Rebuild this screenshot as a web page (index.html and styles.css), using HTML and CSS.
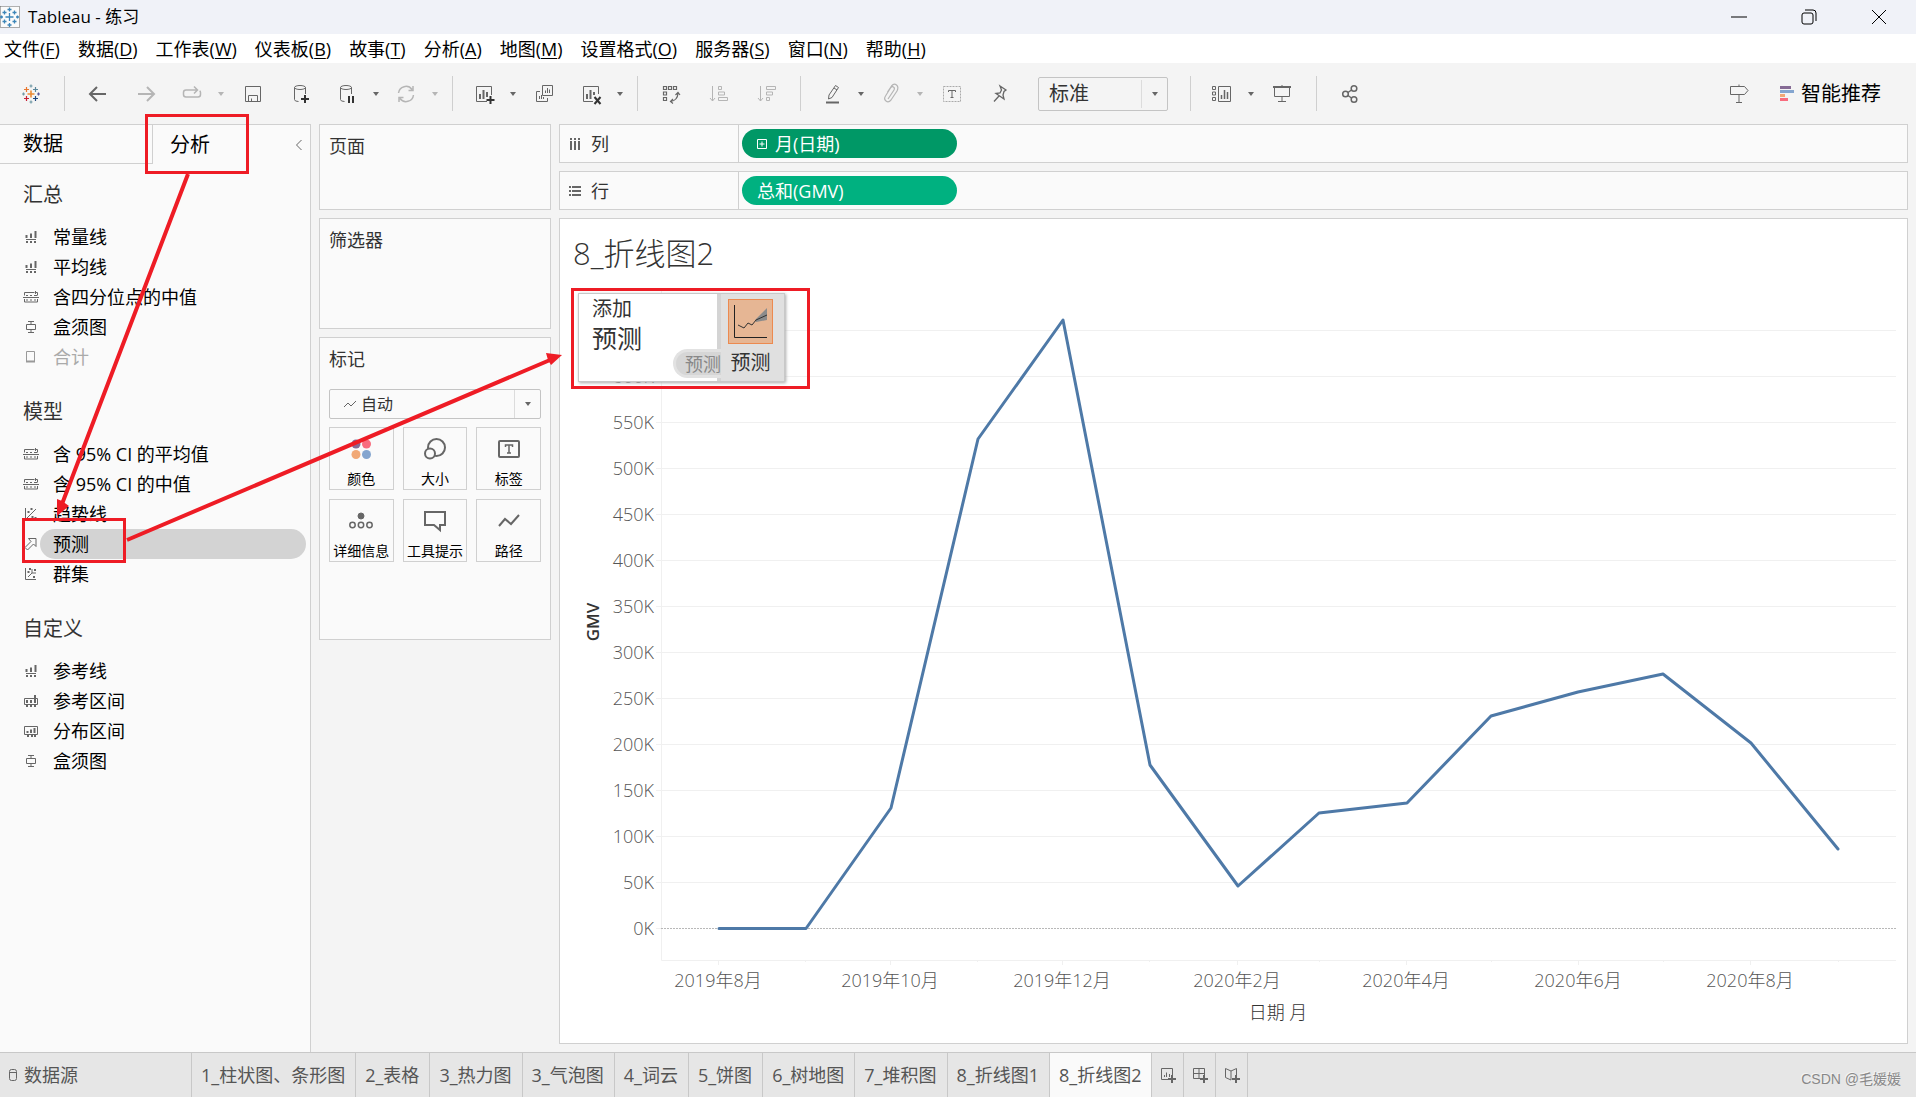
FILE: index.html
```html
<!DOCTYPE html>
<html lang="zh-CN">
<head>
<meta charset="utf-8">
<title>Tableau - 练习</title>
<link rel="stylesheet" href="styles.css">
</head>
<body>
<svg class="defs" aria-hidden="true">
  <symbol id="ref-line" viewBox="0 0 18 18">
    <path d="M4.500 7v3M9 5.500v4.500M13.500 3v7" stroke-width="2"/>
    <path d="M4 11.500h10"/>
    <path d="M4 14h2M8 14h2M12 14h2" stroke-width="2"/>
  </symbol>
  <symbol id="ref-dist" viewBox="0 0 18 18">
    <path d="M2.500 7.500v-3h10M14 4.500h1.500v3M2.500 11v3h13v-3M1 9.500h16M4 7.500h2M8 7.500h2M12 7.500h3M4 12h2M8 12h2M12 12h2M13.500 3v3"/>
  </symbol>
  <symbol id="box-plot" viewBox="0 0 18 18">
    <path d="M6 3.500h6M9 3.500v3M4.500 6.500h9v5h-9zM9 11.500v3M6 14.500h6"/>
  </symbol>
  <symbol id="caret" viewBox="0 0 8 8"><path d="M1 2h6L4 6z"/></symbol>
</svg>

<header class="titlebar">
  <svg class="app-icon" viewBox="0 0 20 22"><rect width="20" height="22" fill="#fbfbfb"/><path d="M20 0v22H0" fill="none" stroke="#a9a9a9" stroke-width="2"/><path d="M9.500 7v8M5.500 11h8M9.500 1.500v4M7.500 3.500h4M9.500 17v4M7.500 19h4M4.500 4.500v4M2.500 6.500h4M14.500 4.500v4M12.500 6.500h4M4.500 13.500v4M2.500 15.500h4M14.500 13.500v4M12.500 15.500h4M1.500 9.500v3M0 11h3M17.500 9.500v3M16 11h3" stroke="#3d86b8" stroke-width="1.300"/></svg>
  <h1 class="app-title">Tableau - 练习</h1>
  <div class="window-controls">
    <button aria-label="最小化"><svg viewBox="0 0 16 16"><path d="M0 8h16"/></svg></button>
    <button aria-label="还原"><svg viewBox="0 0 16 16"><rect x="1" y="4" width="11" height="11" rx="2"/><path d="M4 1h8a3 3 0 0 1 3 3v8"/></svg></button>
    <button aria-label="关闭"><svg viewBox="0 0 16 16"><path d="M1 1l14 14M15 1L1 15"/></svg></button>
  </div>
</header>

<nav class="menubar">
  <button>文件(<u>F</u>)</button>
  <button>数据(<u>D</u>)</button>
  <button>工作表(<u>W</u>)</button>
  <button>仪表板(<u>B</u>)</button>
  <button>故事(<u>T</u>)</button>
  <button>分析(<u>A</u>)</button>
  <button>地图(<u>M</u>)</button>
  <button>设置格式(<u>O</u>)</button>
  <button>服务器(<u>S</u>)</button>
  <button>窗口(<u>N</u>)</button>
  <button>帮助(<u>H</u>)</button>
</nav>

<div class="toolbar">
  <button class="tool" aria-label="起始页"><svg viewBox="0 0 24 24"><g stroke-width="1.200"><path d="M12 8.500v7M8.500 12h7" stroke="#eb8a35" stroke-width="1.600"/><path d="M7.500 5v5M5 7.500h5" stroke="#e8762d"/><path d="M16.500 5v5M14 7.500h5" stroke="#5b879b"/><path d="M7.500 14v5M5 16.500h5" stroke="#c72035"/><path d="M16.500 14v5M14 16.500h5" stroke="#1f457e"/><path d="M12 2.500v3M10.500 4h3M12 18.500v3M10.500 20h3" stroke="#7199a6"/><path d="M4.500 10.500v3M3 12h3" stroke="#7199a6"/><path d="M19.500 10.500v3M18 12h3" stroke="#59589b"/></g></svg></button>
  <span class="sep"></span>
  <button class="tool" aria-label="撤消"><svg viewBox="0 0 24 24"><path d="M4 12h16M11 5l-7 7 7 7" stroke-width="2"/></svg></button>
  <button class="tool dim" aria-label="重做"><svg viewBox="0 0 24 24"><path d="M4 12h16M13 5l7 7-7 7" stroke-width="2"/></svg></button>
  <button class="tool split dim" aria-label="重播"><svg viewBox="0 0 24 24"><path d="M17 8H6a2.500 2.500 0 0 0-2.500 2.500v2A2.500 2.500 0 0 0 6 15h12a2.500 2.500 0 0 0 2.500-2.500v-2q0-1-.8-1.800M14 4.500L17.500 8 14 11.500" stroke-width="1.500"/></svg><svg class="caret"><use href="#caret"/></svg></button>
  <button class="tool" aria-label="保存"><svg viewBox="0 0 24 24"><path d="M4.500 4.500h15v15h-15zM7.500 19.500v-6h9v6M10.500 19.500v-3"/></svg></button>
  <button class="tool" aria-label="新建数据源"><svg viewBox="0 0 24 24"><ellipse cx="11" cy="5.500" rx="5.500" ry="2"/><path d="M5.500 5.500v12q0 2 4 2M16.500 5.500V12"/><path d="M16 13v8M12 17h8" stroke="#333" stroke-width="2"/></svg></button>
  <button class="tool split" aria-label="暂停自动更新"><svg viewBox="0 0 24 24"><ellipse cx="11" cy="5.500" rx="5.500" ry="2"/><path d="M5.500 5.500v12q0 2 4 2M16.500 5.500V12"/><path d="M14 14v7M18 14v7" stroke="#333" stroke-width="2"/></svg><svg class="caret"><use href="#caret"/></svg></button>
  <button class="tool split dim" aria-label="运行更新"><svg viewBox="0 0 24 24"><path d="M4.500 11A7.500 7.500 0 0 1 18 7.500M19.500 13A7.500 7.500 0 0 1 6 16.500M19 4v4.500h-4.500M5 20v-4.500h4.500" stroke-width="1.500"/></svg><svg class="caret"><use href="#caret"/></svg></button>
  <span class="sep"></span>
  <button class="tool split" aria-label="新建工作表"><svg viewBox="0 0 24 24"><path d="M19.500 13V4.500h-15v15H15"/><path d="M8 12v5M11.500 8v9M15 10v5" stroke-width="2"/><path d="M18.500 14v8M14.500 18h8" stroke="#333" stroke-width="2"/></svg><svg class="caret"><use href="#caret"/></svg></button>
  <button class="tool" aria-label="复制工作表"><svg viewBox="0 0 24 24"><path d="M9.500 3.500h10v10h-10zM7 9.500H3.500v10h11V16M12.500 11V8.500M14.500 11V6M16.500 11V7.500M6.500 17v-3M8.500 17v-4M10.500 17v-2"/></svg></button>
  <button class="tool split" aria-label="清除工作表"><svg viewBox="0 0 24 24"><path d="M19.500 12V4.500h-15v15H14"/><path d="M8 12v5M11.500 8v9M15 10v3" stroke-width="2"/><path d="M15.500 15l6 7M21.500 15l-6 7" stroke="#333" stroke-width="2"/></svg><svg class="caret"><use href="#caret"/></svg></button>
  <span class="sep"></span>
  <button class="tool" aria-label="交换行和列"><svg viewBox="0 0 24 24"><path d="M4.500 4.500h3v3h-3zM9.500 4.500h3v3h-3zM14.500 4.500h3v3h-3zM4.500 10h3v3h-3zM4.500 15.500h3v3h-3zM19 11.500q-.5 7-7.500 8M16.500 13l2.500-2.500 2 2.500M14 17l-2.500 2.500 2.500 2" stroke-width="1.200"/></svg></button>
  <button class="tool dim" aria-label="升序排序"><svg viewBox="0 0 24 24"><path d="M5.500 4v15M3 16l2.500 3 2.500-3M11.500 4.500h3v3h-3zM11.500 10h6v3h-6zM11.500 15.500h9v3h-9z"/></svg></button>
  <button class="tool dim" aria-label="降序排序"><svg viewBox="0 0 24 24"><path d="M5.500 4v15M3 16l2.500 3 2.500-3M11.500 4.500h9v3h-9zM11.500 10h6v3h-6zM11.500 15.500h3v3h-3z"/></svg></button>
  <span class="sep"></span>
  <button class="tool split" aria-label="突出显示"><svg viewBox="0 0 24 24"><path d="M9 13l6.500-9.500 3 2L12 15.500l-3.500 1.500zM14 6l3 2"/><path d="M6 20.500h13" stroke-width="2"/></svg><svg class="caret"><use href="#caret"/></svg></button>
  <button class="tool split dim" aria-label="组成员"><svg viewBox="0 0 24 24"><path d="M9 17l6-9q1-2-.5-3t-3 1l-5 8q-2 3 .5 5t5-1l6-9q2-4-.5-6t-5 1l-4 6" stroke-width="1.200"/></svg><svg class="caret"><use href="#caret"/></svg></button>
  <button class="tool" aria-label="显示标记标签"><svg viewBox="0 0 24 24"><path d="M3.500 4.500h17v15h-17z" stroke="#aaa" stroke-dasharray="2 1"/><path d="M8.500 10V8.500h7V10M12 8.500v7M10.500 15.500h3"/></svg></button>
  <button class="tool" aria-label="固定轴"><svg viewBox="0 0 24 24"><path d="M12 4l6 4-2 1.500-1 3.500 1 4-8-5.500 4-.5 1.500-3zM11 14l-5 5.500" stroke-width="1.300"/></svg></button>
  <div class="fit">
    <select aria-label="适合"><option>标准</option></select>
    <svg class="arrow"><use href="#caret"/></svg>
  </div>
  <span class="sep"></span>
  <button class="tool split" aria-label="显示/隐藏卡"><svg viewBox="0 0 24 24"><path d="M8.500 4.500h12v15h-12zM2.500 4.500h3v3h-3zM2.500 10h3v3h-3zM2.500 15.500h3v3h-3z"/><path d="M11.500 17v-4M14.500 17V8M17.500 17v-7" stroke-width="1.500"/></svg><svg class="caret"><use href="#caret"/></svg></button>
  <button class="tool" aria-label="演示模式"><svg viewBox="0 0 24 24"><path d="M2 5h18" stroke-width="2"/><path d="M3.500 5v9.500h15V5M11 14.500v5M7 19.500h8M11 3v2"/></svg></button>
  <span class="sep"></span>
  <button class="tool" aria-label="共享"><svg viewBox="0 0 24 24"><g stroke-width="1.500"><circle cx="7.500" cy="12" r="2.800"/><circle cx="16" cy="6.500" r="2.800"/><circle cx="16" cy="17.500" r="2.800"/><path d="M10 10.500l3.500-2.500M10 13.500l3.500 2.500"/></g></svg></button>
  <button class="tool guide" aria-label="指南"><svg viewBox="0 0 24 24"><path d="M3.500 4.500h14l3.500 4-3.500 4h-14zM12 2.500v2M12 12.500v8M9 20.500h6"/></svg></button>
  <button class="show-me"><svg viewBox="0 0 14 18"><path fill="#866b95" d="M0 1h11v3H0z"/><path fill="#84a5cf" d="M0 5h14v3H0z"/><path fill="#f1a876" d="M0 9h5v3H0z"/><path fill="#f86c7e" d="M0 13h8v3H0z"/></svg>智能推荐</button>
</div>

<main class="work">
  <aside class="side">
    <div class="side-tabs">
      <button class="side-tab">数据</button>
      <button class="side-tab active">分析</button>
      <button class="collapse" aria-label="折叠"><svg viewBox="0 0 8 12"><path d="M6.500 1l-5 5 5 5"/></svg></button>
    </div>
    <section class="pane-group">
      <h2>汇总</h2>
      <ul>
        <li><svg><use href="#ref-line"/></svg><button>常量线</button></li>
        <li><svg><use href="#ref-line"/></svg><button>平均线</button></li>
        <li><svg><use href="#ref-dist"/></svg><button>含四分位点的中值</button></li>
        <li><svg><use href="#box-plot"/></svg><button>盒须图</button></li>
        <li class="off"><svg viewBox="0 0 18 18"><path d="M4.500 3.500h8v10h-8z"/><path d="M4 13.500h9" stroke-width="2"/></svg><button disabled>合计</button></li>
      </ul>
    </section>
    <section class="pane-group">
      <h2>模型</h2>
      <ul>
        <li><svg><use href="#ref-dist"/></svg><button>含 95% CI 的平均值</button></li>
        <li><svg><use href="#ref-dist"/></svg><button>含 95% CI 的中值</button></li>
        <li><svg viewBox="0 0 18 18"><path d="M3.500 3v11.500H14M5 13l9-9"/><path d="M5.500 7h2M8.500 4h2M9.500 12h2M12.500 13h2" stroke-width="2"/></svg><button>趋势线</button></li>
        <li class="selected"><svg viewBox="0 0 18 18"><path d="M6.500 3.500h7.500v8l-2.500-2.500-6 6-2.500-2.500 6-6z"/></svg><button>预测</button></li>
        <li><svg viewBox="0 0 18 18"><path d="M3.500 3v11.500H14M6 12l4-4M10 8V4M10 8h4"/><path d="M5.500 7h2M7 4h2M12 5h2M11 12h2" stroke-width="2"/></svg><button>群集</button></li>
      </ul>
    </section>
    <section class="pane-group">
      <h2>自定义</h2>
      <ul>
        <li><svg><use href="#ref-line"/></svg><button>参考线</button></li>
        <li><svg viewBox="0 0 18 18"><path d="M2.500 6.500h13v6h-13z"/><path d="M5 8v3M9 8v3M13 3v8M5 13v2M9 13v2M13 13v2" stroke-width="2"/></svg><button>参考区间</button></li>
        <li><svg viewBox="0 0 18 18"><path d="M2.500 4.500h13v8h-13z"/><path d="M5.500 9v2M9 7.500v3.500M12.500 6v5M5 14h2M9 14h2M12 14h2" stroke-width="2"/></svg><button>分布区间</button></li>
        <li><svg><use href="#box-plot"/></svg><button>盒须图</button></li>
      </ul>
    </section>
  </aside>

  <div class="cards">
    <section class="card pages"><h2>页面</h2></section>
    <section class="card filters"><h2>筛选器</h2></section>
    <section class="card marks">
      <h2>标记</h2>
      <div class="mark-type">
        <svg class="line-mark" viewBox="0 0 12 8"><path d="M0 7l4-4 3 3 5-5"/></svg>
        <select aria-label="标记类型"><option>自动</option></select>
        <svg class="arrow"><use href="#caret"/></svg>
      </div>
      <div class="mark-grid">
        <button><svg viewBox="0 0 24 24"><g stroke="none"><circle cx="7" cy="7" r="4.500" fill="#866b95"/><circle cx="17.500" cy="7" r="4.500" fill="#f86c7e"/><circle cx="7" cy="17.500" r="4.500" fill="#f1a876"/><circle cx="17.500" cy="17.500" r="4.500" fill="#84a5cf"/></g></svg>颜色</button>
        <button><svg viewBox="0 0 24 24"><circle cx="13.500" cy="10.500" r="8.500"/><circle cx="7" cy="16.500" r="5" fill="#fafafa"/></svg>大小</button>
        <button><svg viewBox="0 0 24 24"><rect x="2" y="4" width="20" height="16" rx="1"/><path d="M8.500 10V8h7v2M12 8v8M10 16h4" stroke-width="1.500"/></svg>标签</button>
        <button><svg viewBox="0 0 24 24"><circle cx="12" cy="7" r="3" fill="#666" stroke-width="1"/><circle cx="3.500" cy="16" r="2.700" stroke-width="1.500"/><circle cx="12" cy="16" r="2.700" stroke-width="1.500"/><circle cx="20.500" cy="16" r="2.700" stroke-width="1.500"/></svg>详细信息</button>
        <button><svg viewBox="0 0 24 24"><path d="M2 3h20v13h-5v5l-6-5H2z"/></svg>工具提示</button>
        <button><svg viewBox="0 0 24 24"><path d="M2 17l6-7 6 5 8-9"/></svg>路径</button>
      </div>
    </section>
  </div>

  <div class="sheet">
    <div class="shelf">
      <span class="shelf-name"><svg viewBox="0 0 12 14"><path d="M2 4v9M6 4v9M10 4v9M2 1v2M6 1v2M10 1v2" stroke-width="2"/></svg>列</span>
      <button class="pill date"><svg viewBox="0 0 10 10"><path d="M.5.5h9v9h-9zM5 2.500v5M2.500 5h5"/></svg>月(日期)</button>
    </div>
    <div class="shelf">
      <span class="shelf-name"><svg viewBox="0 0 12 14"><path d="M3 3h9M3 7h9M3 11h9M0 3h2M0 7h2M0 11h2" stroke-width="2"/></svg>行</span>
      <button class="pill">总和(GMV)</button>
    </div>
    <section class="view">
      <h2 class="view-title">8_折线图2</h2>
      <svg class="chart" viewBox="560 281 1347 761" preserveAspectRatio="xMinYMin meet" role="img" aria-label="GMV 折线图">
        <path class="grid" d="M656 330.500H1896M656 376.500H1896M656 422.500H1896M656 468.500H1896M656 514.500H1896M656 560.500H1896M656 606.500H1896M656 652.500H1896M656 698.500H1896M656 744.500H1896M656 790.500H1896M656 836.500H1896M656 882.500H1896M656 928.500H661M661.500 288V960.500H1896M718.500 960v5M805.500 960v2M890.500 960v5M977.500 960v2M1062.500 960v5M1149.500 960v2M1237.500 960v5M1319.500 960v2M1406.500 960v5M1491.500 960v2M1578.500 960v5M1663.500 960v2M1750.500 960v5M1838.500 960v2"/>
        <path class="zero" d="M661 928.500H1896"/>
        <g class="y-labels">
          <text x="654" y="383">600K</text><text x="654" y="429">550K</text><text x="654" y="475">500K</text><text x="654" y="521">450K</text><text x="654" y="567">400K</text><text x="654" y="613">350K</text><text x="654" y="659">300K</text><text x="654" y="705">250K</text><text x="654" y="751">200K</text><text x="654" y="797">150K</text><text x="654" y="843">100K</text><text x="654" y="889">50K</text><text x="654" y="935">0K</text>
        </g>
        <g class="x-labels">
          <text x="718" y="987">2019年8月</text><text x="890" y="987">2019年10月</text><text x="1062" y="987">2019年12月</text><text x="1237" y="987">2020年2月</text><text x="1406" y="987">2020年4月</text><text x="1578" y="987">2020年6月</text><text x="1750" y="987">2020年8月</text>
        </g>
        <text class="x-title" x="1278" y="1019">日期 月</text>
        <text class="y-title" transform="translate(599 622) rotate(-90)">GMV</text>
        <polyline class="series" points="719,928.500 806,928.500 891,808 978,439 1063,320 1150,765 1238,886 1319,813 1407,803 1491,716 1578,692 1663,674 1751,743 1838,849"/>
      </svg>
      <div class="drop-target">
        <div class="drop-text"><span>添加</span><strong>预测</strong></div>
        <span class="drag-ghost">预测</span>
        <div class="drop-option">
          <svg viewBox="0 0 45 45"><rect x=".5" y=".5" width="44" height="44" fill="#e6b694" stroke="#ec8a50"/><path d="M27 21l12-12v12l-11 2z" fill="#8b8b8b" stroke="none"/><path d="M6.500 6v32.500H39" fill="none" stroke="#222"/><path d="M10 26l6 3 4-5 4 2 4-5 11-5" fill="none" stroke="#333"/></svg>
          预测
        </div>
      </div>
    </section>
  </div>
</main>

<footer class="sheet-tabs">
  <button class="source"><svg viewBox="0 0 10 14"><rect x="1.500" y="1.500" width="7" height="11" rx="2"/><path d="M1.500 4.500h7"/></svg>数据源</button>
  <button>1_柱状图、条形图</button>
  <button>2_表格</button>
  <button>3_热力图</button>
  <button>3_气泡图</button>
  <button>4_词云</button>
  <button>5_饼图</button>
  <button>6_树地图</button>
  <button>7_堆积图</button>
  <button>8_折线图1</button>
  <button class="current">8_折线图2</button>
  <button class="add" aria-label="新建工作表"><svg viewBox="0 0 16 16"><path d="M12.500 8V1.500h-11v11H8M4.500 10V8M6.500 10V5.500M9.500 10V7"/><path d="M12 8v8M8 12h8" stroke-width="2"/></svg></button>
  <button class="add" aria-label="新建仪表板"><svg viewBox="0 0 16 16"><path d="M12.500 8V1.500h-11v10H8M1.500 6.500h11M7 1.500v10"/><path d="M12 8v8M8 12h8" stroke-width="2"/></svg></button>
  <button class="add" aria-label="新建故事"><svg viewBox="0 0 16 16"><path d="M7 13l-5.500-2.500v-9L7 4l5.500-2.500V8M7 4v9"/><path d="M12 8v8M8 12h8" stroke-width="2"/></svg></button>
  <span class="credit">CSDN @毛媛媛</span>
</footer>

<svg class="annotations" width="1916" height="1097" viewBox="0 0 1916 1097" aria-hidden="true">
  <g fill="none" stroke="#ee1c25">
    <rect x="146.500" y="115.500" width="101" height="57" stroke-width="3"/>
    <rect x="23.500" y="519.500" width="101" height="42" stroke-width="3"/>
    <rect x="572.500" y="289.500" width="236" height="98" stroke-width="3"/>
    <path d="M188 174L62 504M127 540L550 360" stroke-width="4"/>
  </g>
  <path d="M57 516V499l5 2 7 5zM562 355l-16-2 2 7 3 5z" fill="#ee1c25"/>
</svg>
</body>
</html>
```
FILE: styles.css
```css
* { box-sizing: border-box; }

body {
  margin: 0;
  position: relative;
  min-height: 100vh;
  display: flex;
  flex-direction: column;
  background: #f4f4f4;
  color: #000;
  font: 18px/24px "Open Sans", "Noto Sans CJK SC", sans-serif;
}

h1, h2, ul { margin: 0; padding: 0; font-weight: 400; list-style: none; }

button, select {
  margin: 0;
  padding: 0;
  border: 0;
  background: none;
  color: inherit;
  font: inherit;
  white-space: nowrap;
}

select { appearance: none; }
svg { display: block; fill: none; stroke: #666; flex: none; }
.defs { position: absolute; width: 0; height: 0; }

/* Window frame */
.titlebar {
  display: flex;
  align-items: center;
  height: 34px;
  background: #f0f2f8;
}
.app-icon { width: 20px; height: 22px; }
.app-title { margin-left: 8px; font-size: 17px; line-height: 24px; }
.window-controls { display: flex; margin-left: auto; padding-right: 2px; }
.window-controls button { width: 70px; display: flex; justify-content: center; }
.window-controls svg { width: 16px; height: 16px; stroke: #000; }

.menubar {
  display: flex;
  align-items: center;
  gap: 18px;
  height: 29px;
  padding-left: 4px;
  background: #fff;
}
.menubar u { text-underline-offset: 2px; }

/* Toolbar */
.toolbar {
  display: flex;
  align-items: center;
  height: 61px;
  padding: 0 35px 0 7px;
}
.tool { display: flex; align-items: center; justify-content: center; width: 48px; height: 36px; }
.tool > svg { width: 24px; height: 24px; }
.split { width: 59px; justify-content: flex-start; padding-left: 10px; gap: 13px; }
.tool > .caret { width: 8px; height: 8px; fill: #666; stroke: none; }
.dim svg { stroke: #b5b5b5; }
.tool.dim > .caret { fill: #b5b5b5; }
.sep { width: 1px; height: 35px; margin: 0 9px; background: #cfcfcf; }

/* Drop-downs with a divided arrow cell */
.fit, .mark-type { display: grid; align-items: center; }
.fit > *, .mark-type > * { grid-area: 1 / 1; }
.fit select, .mark-type select {
  width: 100%;
  border: 1px solid #c4c4c4;
  border-radius: 2px;
  color: #333;
}
.arrow {
  justify-self: end;
  width: 27px;
  height: 28px;
  padding: 10px 9px;
  border-left: 1px solid #dcdcdc;
  fill: #666;
  stroke: none;
  pointer-events: none;
}
.fit { width: 130px; margin: 0 13px 0 14px; }
.fit select { height: 34px; padding-left: 10px; font-size: 20px; }

.guide { margin-left: auto; }
.show-me { display: flex; align-items: center; gap: 7px; margin-left: 17px; font-size: 20px; }
.show-me svg { width: 14px; height: 18px; stroke: none; }

/* Work area */
.work { flex: 1; display: flex; gap: 8px; padding-right: 8px; }

.side {
  width: 311px;
  border: 1px solid #d0d0d0;
  border-width: 1px 1px 0 0;
  background: #fafafa;
}
.side-tabs { display: flex; height: 39px; margin-bottom: 3px; font-size: 20px; }
.side-tab { width: 153px; padding-left: 23px; text-align: left; border: 1px solid #d0d0d0; border-width: 0 1px 1px 0; }
.side-tab.active { width: auto; padding-left: 17px; border: 0; }
.collapse { margin: 0 7px 0 auto; }
.collapse svg { width: 8px; height: 12px; }

.pane-group { margin-bottom: 12px; }
.pane-group h2 { padding-left: 23px; font-size: 20px; line-height: 55px; color: #333; }
.pane-group li { display: flex; align-items: center; height: 30px; padding-right: 4px; }
.pane-group li svg { width: 18px; height: 18px; margin: 0 0 0 22px; }
.pane-group li button { flex: 1; height: 30px; padding-left: 13px; border-radius: 15px; text-align: left; }
.off svg { stroke: #999; }
.off button { color: #aaa; }
.selected button { background: #d3d3d3; }

.cards { width: 232px; display: flex; flex-direction: column; gap: 8px; }
.card { padding: 9px; border: 1px solid #d0d0d0; background: #fafafa; color: #333; }
.card h2 { font-size: 18px; line-height: 24px; }
.pages { height: 86px; }
.filters { height: 111px; }
.marks { height: 303px; }

.mark-type { margin: 18px 0 8px; }
.line-mark { width: 12px; height: 8px; margin-left: 15px; z-index: 1; }
.mark-type select { height: 30px; padding-left: 31px; font-size: 16px; }

.mark-grid { display: grid; grid-template-columns: repeat(3, 1fr); gap: 9px; }
.mark-grid button {
  display: flex;
  flex-direction: column;
  align-items: center;
  gap: 8px;
  height: 63px;
  padding-top: 9px;
  border: 1px solid #d0d0d0;
  color: #000;
  font-size: 14px;
  line-height: 20px;
}
.mark-grid svg { width: 24px; height: 24px; stroke-width: 2; }

.sheet { flex: 1; min-width: 0; display: flex; flex-direction: column; gap: 8px; padding-bottom: 8px; }
.shelf { display: flex; align-items: center; height: 39px; border: 1px solid #d0d0d0; background: #fafafa; }
.shelf-name {
  display: flex;
  align-items: center;
  gap: 10px;
  align-self: stretch;
  width: 179px;
  padding-left: 9px;
  border-right: 1px solid #d0d0d0;
  color: #333;
}
.shelf-name svg { width: 12px; height: 14px; }
.pill {
  display: flex;
  align-items: center;
  gap: 8px;
  width: 215px;
  height: 29px;
  margin-left: 3px;
  padding-left: 15px;
  border-radius: 15px;
  background: #00b180;
  color: #fff;
}
.pill svg { width: 10px; height: 10px; stroke: #fff; }
.date { background: #009866; }

/* Worksheet view */
.view { position: relative; flex: 1; border: 1px solid #d0d0d0; background: #fff; }
.view-title { height: 62px; padding: 14px 0 0 13px; font-size: 31px; line-height: 40px; font-weight: 300; color: #333; }
.chart { width: 100%; font-size: 18px; font-weight: 300; }
.chart text { fill: #555; stroke: none; }
.grid { stroke: #f0f0f0; }
.zero { stroke: #b8b8b8; stroke-dasharray: 2 1; }
.y-labels { text-anchor: end; }
.x-labels, .x-title { text-anchor: middle; }
.chart .x-title { fill: #333; }
.chart .y-title { fill: #333; font-size: 17px; font-weight: 600; text-anchor: middle; }
.series { stroke: #4e79a7; stroke-width: 3; stroke-linejoin: round; stroke-linecap: round; }

.drop-target {
  position: absolute;
  left: 18px;
  top: 74px;
  width: 207px;
  height: 89px;
  display: flex;
  justify-content: space-between;
  border: 1px solid #c8c8c8;
  background: #fff;
  box-shadow: 1px 1px 3px #aaa;
  color: #333;
}
.drop-text { display: flex; flex-direction: column; padding: 2px 0 0 13px; font-size: 20px; line-height: 26px; }
.drop-text strong { font-size: 25px; line-height: 32px; font-weight: 400; }
.drag-ghost {
  z-index: 1;
  align-self: flex-end;
  height: 29px;
  margin: 0 -4px 3px auto;
  padding-left: 9px;
  border: 3px solid #e2e2e2;
  border-right: 0;
  border-radius: 15px 0 0 15px;
  background: #d6d6d6;
  color: #888;
  line-height: 24px;
}
.drop-option {
  display: flex;
  flex-direction: column;
  align-items: center;
  gap: 7px;
  width: 67px;
  padding-top: 5px;
  background: linear-gradient(to right, #d4d4d4 4px, #e0e0e0 4px);
  font-size: 20px;
}
.drop-option svg { width: 45px; height: 45px; }

/* Sheet tabs */
.sheet-tabs { display: flex; height: 45px; border-top: 1px solid #c8c8c8; background: #e6e6e6; color: #555; }
.sheet-tabs button { padding: 0 10px 0 9px; border-right: 1px solid #c8c8c8; }
.sheet-tabs .source { display: flex; align-items: center; gap: 6px; width: 192px; padding-left: 8px; }
.source svg { width: 10px; height: 14px; }
.sheet-tabs .current { background: #fafafa; }
.sheet-tabs .add { display: flex; align-items: center; width: 32px; padding: 0 0 0 8px; }
.add svg { width: 16px; height: 16px; }
.credit {
  margin: 14px 15px 0 auto;
  color: #888;
  font: 14px/24px "Liberation Sans", "Noto Sans CJK SC", sans-serif;
  text-shadow: -1px -1px 0 #f4f4f4;
}

/* Red callouts drawn over the window */
.annotations { position: absolute; left: 0; top: 0; stroke: none; pointer-events: none; }
```
